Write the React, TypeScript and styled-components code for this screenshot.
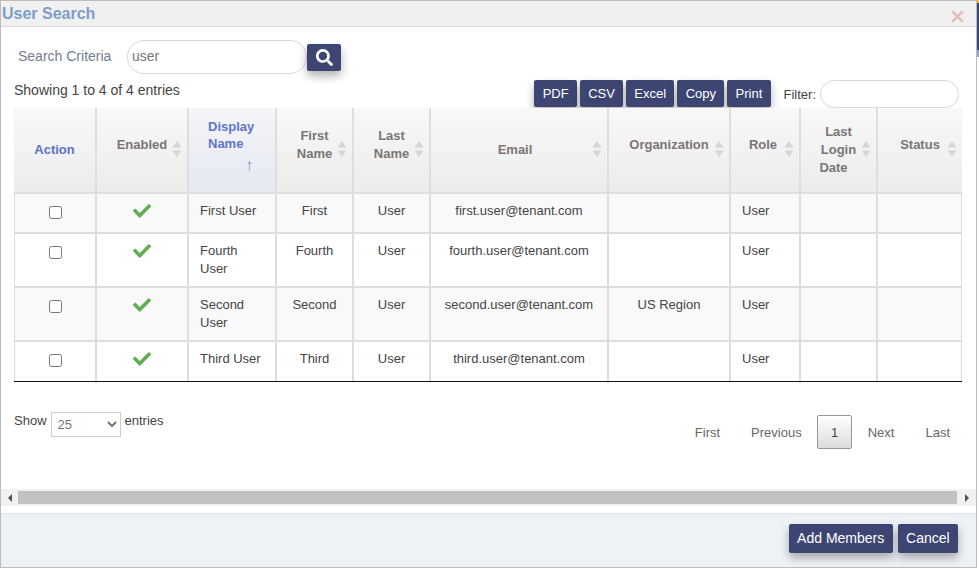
import React from 'react';
import styled, { createGlobalStyle } from 'styled-components';
import { FaCheck, FaSearch } from 'react-icons/fa';

const GlobalStyle = createGlobalStyle`
  html, body {
    margin: 0;
    padding: 0;
    background: #fff;
    overflow: hidden;
  }
  body {
    font-family: "Liberation Sans", Arial, sans-serif;
    font-size: 14px;
    color: #444;
  }
`;

type User = {
  display: React.ReactNode;
  first: string;
  last: string;
  email: string;
  organization?: string;
};

const users: User[] = [
  { display: 'First User', first: 'First', last: 'User', email: 'first.user@tenant.com' },
  { display: 'Fourth User', first: 'Fourth', last: 'User', email: 'fourth.user@tenant.com' },
  {
    display: 'Second User',
    first: 'Second',
    last: 'User',
    email: 'second.user@tenant.com',
    organization: 'US Region',
  },
  { display: 'Third User', first: 'Third', last: 'User', email: 'third.user@tenant.com' },
];

const columnWidths = [83, 92, 88, 77, 77, 178, 122, 70, 77, 84];
const exportButtons = ['PDF', 'CSV', 'Excel', 'Copy', 'Print'];

const SortIcon: React.FC = () => (
  <SortGlyph viewBox="0 0 10 16" aria-hidden>
    <path d="M5 0l4.5 6.5h-9z" />
    <path d="M5 16L.5 9.5h9z" />
  </SortGlyph>
);

export default function App() {
  return (
    <Screen>
      <GlobalStyle />
      <Modal>
        <TitleBar>
          <Title>User Search</Title>
          <CloseIcon viewBox="0 0 12 12" aria-hidden>
            <path d="M1.2 1.2l9.6 9.6M10.8 1.2l-9.6 9.6" />
          </CloseIcon>
        </TitleBar>

        <Content>
          <SearchRow>
            <SearchLabel>Search Criteria</SearchLabel>
            <SearchInput defaultValue="user" />
            <SearchButton aria-label="Search">
              <FaSearch size={17} />
            </SearchButton>
          </SearchRow>

          <ToolbarRow>
            <Info>Showing 1 to 4 of 4 entries</Info>
            <ToolbarRight>
              {exportButtons.map((label) => (
                <ExportButton key={label}>{label}</ExportButton>
              ))}
              <FilterLabel>Filter:</FilterLabel>
              <FilterInput />
            </ToolbarRight>
          </ToolbarRow>

          <Table>
            <colgroup>
              {columnWidths.map((width, i) => (
                <col key={i} style={{ width }} />
              ))}
            </colgroup>
            <thead>
              <tr>
                <HeadCell $accent>Action</HeadCell>
                <HeadCell>
                  <Lifted>Enabled</Lifted>
                  <SortIcon />
                </HeadCell>
                <SortedHeadCell>
                  Display
                  <br />
                  Name
                  <SortedArrow>↑</SortedArrow>
                </SortedHeadCell>
                <HeadCell>
                  <Lifted>
                    First
                    <br />
                    Name
                  </Lifted>
                  <SortIcon />
                </HeadCell>
                <HeadCell>
                  <Lifted>
                    Last
                    <br />
                    Name
                  </Lifted>
                  <SortIcon />
                </HeadCell>
                <HeadCell $shift={8}>
                  Email
                  <SortIcon />
                </HeadCell>
                <HeadCell>
                  <Lifted>Organization</Lifted>
                  <SortIcon />
                </HeadCell>
                <HeadCell $shift={4}>
                  <Lifted>Role</Lifted>
                  <SortIcon />
                </HeadCell>
                <HeadCell>
                  Last
                  <br />
                  Login
                  <br />
                  <DateWord>Date</DateWord>
                  <SortIcon />
                </HeadCell>
                <HeadCell>
                  <Lifted>Status</Lifted>
                  <SortIcon />
                </HeadCell>
              </tr>
            </thead>
            <tbody>
              {users.map((user, i) => (
                <Row key={user.email} $odd={i % 2 === 0}>
                  <Cell $center>
                    <Checkbox type="checkbox" />
                  </Cell>
                  <Cell $center>
                    <EnabledIcon />
                  </Cell>
                  <Cell>{user.display}</Cell>
                  <Cell $center>{user.first}</Cell>
                  <Cell $center>{user.last}</Cell>
                  <Cell $center>{user.email}</Cell>
                  <Cell $center>{user.organization}</Cell>
                  <Cell>User</Cell>
                  <Cell />
                  <Cell />
                </Row>
              ))}
            </tbody>
          </Table>

          <TableFooter>
            <LengthControl>
              Show
              <LengthSelect defaultValue="25">
                <option>10</option>
                <option>25</option>
                <option>50</option>
              </LengthSelect>
              entries
            </LengthControl>
            <Pagination>
              <PageLink>First</PageLink>
              <PageLink>Previous</PageLink>
              <CurrentPage>1</CurrentPage>
              <PageLink>Next</PageLink>
              <PageLink>Last</PageLink>
            </Pagination>
          </TableFooter>
        </Content>

        <ScrollBar>
          <ScrollArrow $dir="left" />
          <ScrollThumb />
          <ScrollArrow $dir="right" />
        </ScrollBar>

        <Footer>
          <FooterButton>Add Members</FooterButton>
          <FooterButton>Cancel</FooterButton>
        </Footer>
      </Modal>

      <PageEdge>
        <EdgeYellow />
        <EdgeNavy />
        <EdgeSteel />
      </PageEdge>
    </Screen>
  );
}

const Screen = styled.div`
  width: 979px;
  height: 569px;
  overflow: hidden;
  display: grid;
  grid-template-columns: 977px 2px;
  grid-template-rows: 568px 1px;
`;

const Modal = styled.div`
  grid-column: 1;
  grid-row: 1;
  display: flex;
  flex-direction: column;
  box-sizing: border-box;
  border: 1px solid #bcbcbc;
  background: #fff;
  overflow: hidden;
`;

const TitleBar = styled.div`
  flex: none;
  height: 25px;
  display: flex;
  align-items: center;
  justify-content: space-between;
  background: #f0f0f0;
  border-bottom: 1px solid #dcdcdc;
  border-top-left-radius: 2px;
  padding: 0 12px 0 1px;
`;

const Title = styled.div`
  font-size: 16px;
  font-weight: bold;
  color: #7f9dcb;
`;

const CloseIcon = styled.svg`
  width: 13px;
  height: 13px;
  margin-top: 6px;
  fill: none;
  stroke: #dfbdb7;
  stroke-width: 2.2;
`;

const Content = styled.div`
  flex: 1;
  min-height: 0;
  padding: 13px 0 0 13px;
`;

const SearchRow = styled.div`
  display: flex;
  align-items: center;
  height: 34px;
`;

const SearchLabel = styled.label`
  width: 113px;
  padding: 0 0 2px 4px;
  box-sizing: border-box;
  color: #74808f;
`;

const SearchInput = styled.input`
  box-sizing: border-box;
  width: 180px;
  height: 34px;
  padding: 0 4px 2px;
  border: 1px solid #d8d8d8;
  border-radius: 17px;
  outline: none;
  font: 14px "Liberation Sans", Arial, sans-serif;
  color: #777;
`;

const SearchButton = styled.button`
  box-sizing: border-box;
  width: 34px;
  height: 27px;
  padding: 0;
  display: flex;
  align-items: center;
  justify-content: center;
  border: none;
  border-radius: 2px;
  background: #3d4673;
  color: #fff;
  box-shadow: 0 5px 10px rgba(0, 0, 0, 0.3);
`;

const ToolbarRow = styled.div`
  display: flex;
  justify-content: space-between;
  height: 28px;
  margin-top: 6px;
  width: 945px;
`;

const Info = styled.div`
  color: #444;
  line-height: 20px;
`;

const ToolbarRight = styled.div`
  display: flex;
  align-items: flex-start;
  gap: 3px;
`;

const ExportButton = styled.button`
  box-sizing: border-box;
  height: 27px;
  padding: 0 8.25px;
  border: none;
  border-radius: 2px;
  background: #3d4673;
  color: #fff;
  font: 13px "Liberation Sans", Arial, sans-serif;
  box-shadow: 0 5px 10px rgba(0, 0, 0, 0.3);
`;

const FilterLabel = styled.label`
  margin: 7px 1px 0 10px;
  font-size: 13px;
  line-height: 16px;
  color: #444;
`;

const FilterInput = styled.input`
  box-sizing: border-box;
  width: 139px;
  height: 28px;
  border: 1px solid #d8d8d8;
  border-radius: 14px;
  outline: none;
`;

const Table = styled.table`
  width: 948px;
  table-layout: fixed;
  border-collapse: separate;
  border-spacing: 0;
  border-bottom: 1px solid #111;
`;

const HeadCell = styled.th<{ $accent?: boolean; $shift?: number }>`
  position: relative;
  box-sizing: border-box;
  height: 86px;
  padding: 0 ${({ $shift }) => 2 + ($shift ?? 0)}px 1px 2px;
  border-right: 2px solid #dedede;
  border-bottom: 2px solid #dedede;
  background: linear-gradient(#f8f8f8, #ececec);
  color: ${({ $accent }) => ($accent ? '#5a72c6' : '#7b7574')};
  font-size: 13px;
  line-height: 18px;
  font-weight: bold;
  text-align: center;
  vertical-align: middle;

  &:last-child {
    border-right: none;
  }
`;

const SortedHeadCell = styled(HeadCell)`
  background: linear-gradient(#f4f5f9, #e5e8f0);
  color: #5f75c9;
  text-align: left;
  line-height: 17px;
  vertical-align: top;
  padding: 10px 0 0 19px;
`;

const SortedArrow = styled.span`
  display: block;
  padding: 5px 0 0 37px;
  line-height: 18px;
  color: #8b96c0;
  font-weight: normal;
  font-size: 17px;
`;

const Lifted = styled.span`
  display: inline-block;
  padding-bottom: 10px;
`;

const DateWord = styled.span`
  display: inline-block;
  margin-right: 10px;
`;

const SortGlyph = styled.svg`
  position: absolute;
  right: 5px;
  top: 33px;
  width: 10px;
  height: 16px;
  fill: #d6d6d6;
`;

const Row = styled.tr<{ $odd: boolean }>`
  background: ${({ $odd }) => ($odd ? '#f9f9f9' : '#fff')};
`;

const Cell = styled.td<{ $center?: boolean }>`
  box-sizing: border-box;
  padding: 8px 11px;
  border-right: 2px solid #dedede;
  border-bottom: 2px solid #dedede;
  font-size: 13px;
  line-height: 18px;
  color: #444;
  vertical-align: top;
  text-align: ${({ $center }) => ($center ? 'center' : 'left')};

  &:first-child {
    border-left: 1px solid #dedede;
  }
  &:last-child {
    border-right: 1px solid #dedede;
  }
  tr:last-child > & {
    border-bottom: none;
    padding-bottom: 9px;
  }
`;

const Checkbox = styled.input`
  display: block;
  width: 13px;
  height: 13px;
  margin: 4px auto 5px;
`;

const EnabledIcon = styled(FaCheck)`
  display: block;
  width: 18px;
  height: 18px;
  margin: 0 auto 4px;
  color: #62ad55;
`;

const TableFooter = styled.div`
  display: flex;
  justify-content: space-between;
  align-items: flex-start;
  margin-top: 30px;
  width: 951.5px;
`;

const LengthControl = styled.div`
  display: flex;
  align-items: flex-start;
  gap: 4px;
  font-size: 13px;
  line-height: 18px;
  color: #444;
`;

const LengthSelect = styled.select`
  box-sizing: border-box;
  width: 70px;
  height: 25px;
  padding: 0 2px;
  border: 1px solid #ccc;
  border-radius: 0;
  outline: none;
  background: #fff;
  color: #777;
  font: 13px "Liberation Sans", Arial, sans-serif;
`;

const Pagination = styled.div`
  display: flex;
  align-items: center;
  margin-top: 3px;
`;

const PageLink = styled.span`
  padding: 0 15.5px;
  font-size: 13px;
  color: #666;
`;

const CurrentPage = styled.span`
  box-sizing: border-box;
  width: 35px;
  height: 34px;
  display: flex;
  align-items: center;
  justify-content: center;
  border: 1px solid #979797;
  border-radius: 2px;
  background: linear-gradient(#fff, #dcdcdc);
  font-size: 13px;
  color: #444;
`;

const ScrollBar = styled.div`
  flex: none;
  height: 17px;
  display: flex;
  align-items: center;
  background: #f1f1f1;
`;

const ScrollArrow = styled.span<{ $dir: 'left' | 'right' }>`
  flex: none;
  width: ${({ $dir }) => ($dir === 'left' ? 17 : 19)}px;
  display: flex;
  justify-content: center;

  &::before {
    content: '';
    border-style: solid;
    border-color: transparent;
    border-width: 4px 0 4px 4px;
    border-left-color: #505050;
    transform: ${({ $dir }) => ($dir === 'left' ? 'rotate(180deg)' : 'none')};
  }
`;

const ScrollThumb = styled.div`
  flex: 1;
  height: 13px;
  background: #c1c1c1;
`;

const Footer = styled.div`
  flex: none;
  height: 54px;
  box-sizing: border-box;
  margin-top: 7px;
  padding: 10px 18px 0 0;
  display: flex;
  justify-content: flex-end;
  align-items: flex-start;
  gap: 5px;
  background: #eef1f6;
  border-top: 1px solid #e2e6ec;
`;

const FooterButton = styled.button`
  box-sizing: border-box;
  height: 29px;
  padding: 0 8.4px 2px;
  border: none;
  border-radius: 2px;
  background: #3d4673;
  color: #fff;
  font: 14px "Liberation Sans", Arial, sans-serif;
  box-shadow: 0 5px 10px rgba(0, 0, 0, 0.3);
`;

const PageEdge = styled.div`
  grid-column: 2;
  grid-row: 1 / span 2;
  display: flex;
  flex-direction: column;
`;

const EdgeYellow = styled.div`
  height: 3px;
  background: #e8b93c;
`;

const EdgeNavy = styled.div`
  height: 47px;
  background: #3d4673;
`;

const EdgeSteel = styled.div`
  height: 7px;
  background: #9aa3c0;
`;
